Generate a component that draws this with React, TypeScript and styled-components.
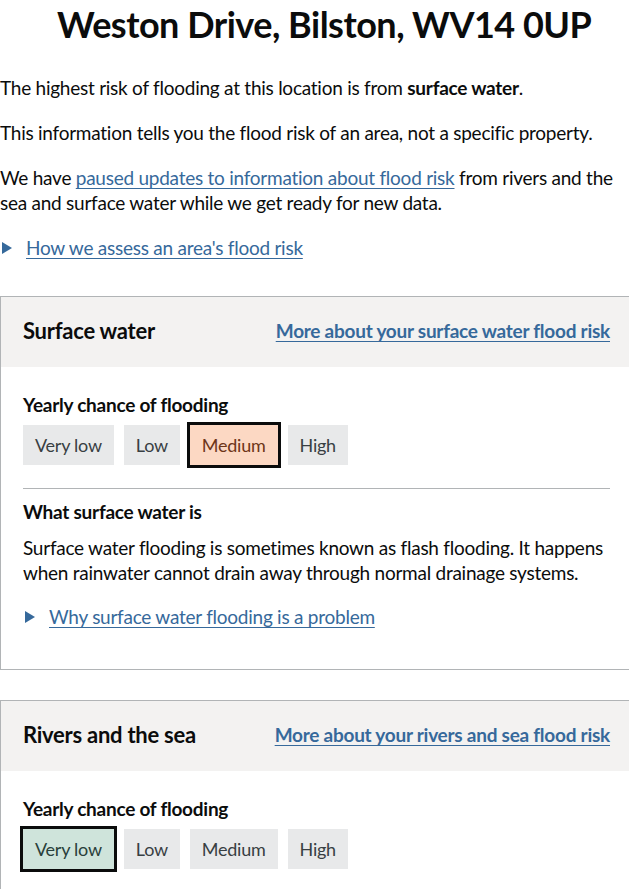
import * as React from "react";
import styled, { createGlobalStyle } from "styled-components";

const colors = {
  text: "#0b0c0c",
  link: "#36699b",
  border: "#b1b4b6",
  panel: "#f3f2f1",
};

const GlobalStyle = createGlobalStyle`
  body {
    margin: 0;
    background: #fff;
    color: ${colors.text};
    font-family: Lato, "Liberation Sans", Arial, sans-serif;
    letter-spacing: -0.25px;
  }
`;

const Page = styled.main`
  padding-top: 1px;
  overflow: hidden;
`;

const Title = styled.h1`
  margin: 0 0 28px;
  padding-left: 57px;
  font-size: 36px;
  line-height: 46px;
  letter-spacing: -0.5px;
  font-weight: 700;
  white-space: nowrap;
`;

const Para = styled.p`
  margin: 0 0 20px;
  font-size: 19px;
  line-height: 25px;
`;

const Link = styled.a<{ $bold?: boolean }>`
  color: ${colors.link};
  font-weight: ${p => (p.$bold ? 700 : 400)};
  text-decoration: underline;
  text-decoration-thickness: 1px;
  text-underline-offset: 3px;
`;

const Summary = styled.div`
  display: flex;
  align-items: center;
  gap: 14px;
  font-size: 19px;
  line-height: 25px;
`;

const Arrow = styled.span`
  display: block;
  width: 0;
  height: 0;
  margin-left: 2px;
  border-top: 6px solid transparent;
  border-bottom: 6px solid transparent;
  border-left: 10px solid ${colors.link};
`;

const Card = styled.section`
  margin: 36px -6px 0 0;
  border: 1px solid ${colors.border};

  & + & {
    margin-top: 30px;
  }
`;

const CardHeader = styled.header`
  display: flex;
  align-items: center;
  justify-content: space-between;
  height: 70px;
  padding: 0 24px 3px 22px;
  box-sizing: border-box;
  background: ${colors.panel};
  font-size: 19px;
`;

const CardTitle = styled.h2`
  margin: 0;
  font-size: 22px;
  line-height: 28px;
  font-weight: 700;
`;

const CardBody = styled.div`
  padding: 25px 24px 40px 22px;
`;

const Label = styled.h3`
  margin: 0;
  font-size: 19px;
  line-height: 25px;
  font-weight: 700;
`;

const TagRow = styled.div`
  display: flex;
  gap: 10px;
  margin-top: 8px;
`;

const tagTones = {
  none: { bg: "#e8e9ea", fg: "#383f43" },
  medium: { bg: "#fcd8c3", fg: "#6e3619" },
  low: { bg: "#cfe4db", fg: "#29403a" },
};

const Tag = styled.span<{ $tone: keyof typeof tagTones; $active?: boolean }>`
  display: flex;
  align-items: center;
  height: 40px;
  padding: 0 12px;
  font-size: 18px;
  background: ${p => tagTones[p.$tone].bg};
  color: ${p => tagTones[p.$tone].fg};
  outline: ${p => (p.$active ? `3px solid ${colors.text}` : "none")};
`;

const Rule = styled.hr`
  margin: 23px 0 10px;
  border: 0;
  border-top: 1px solid ${colors.border};
`;

const BodyText = styled.p`
  margin: 11px 0 19px;
  font-size: 19px;
  line-height: 25px;
`;

const levels = ["Very low", "Low", "Medium", "High"];

function Chance({ active, tone }: { active: string; tone: keyof typeof tagTones }) {
  return (
    <>
      <Label>Yearly chance of flooding</Label>
      <TagRow>
        {levels.map(l => (
          <Tag key={l} $tone={l === active ? tone : "none"} $active={l === active}>
            {l}
          </Tag>
        ))}
      </TagRow>
    </>
  );
}

export default function App() {
  return (
    <>
      <GlobalStyle />
      <Page>
        <Title>Weston Drive, Bilston, WV14 0UP</Title>
        <Para>
          The highest risk of flooding at this location is from <b>surface water</b>.
        </Para>
        <Para>This information tells you the flood risk of an area, not a specific property.</Para>
        <Para>
          We have <Link href="#">paused updates to information about flood risk</Link> from rivers and the
          sea and surface water while we get ready for new data.
        </Para>
        <Summary>
          <Arrow />
          <Link href="#">How we assess an area's flood risk</Link>
        </Summary>

        <Card>
          <CardHeader>
            <CardTitle>Surface water</CardTitle>
            <Link href="#" $bold>
              More about your surface water flood risk
            </Link>
          </CardHeader>
          <CardBody>
            <Chance active="Medium" tone="medium" />
            <Rule />
            <Label>What surface water is</Label>
            <BodyText>
              Surface water flooding is sometimes known as flash flooding. It happens when rainwater
              cannot drain away through normal drainage systems.
            </BodyText>
            <Summary>
              <Arrow />
              <Link href="#">Why surface water flooding is a problem</Link>
            </Summary>
          </CardBody>
        </Card>

        <Card>
          <CardHeader>
            <CardTitle>Rivers and the sea</CardTitle>
            <Link href="#" $bold>
              More about your rivers and sea flood risk
            </Link>
          </CardHeader>
          <CardBody>
            <Chance active="Very low" tone="low" />
          </CardBody>
        </Card>
      </Page>
    </>
  );
}
